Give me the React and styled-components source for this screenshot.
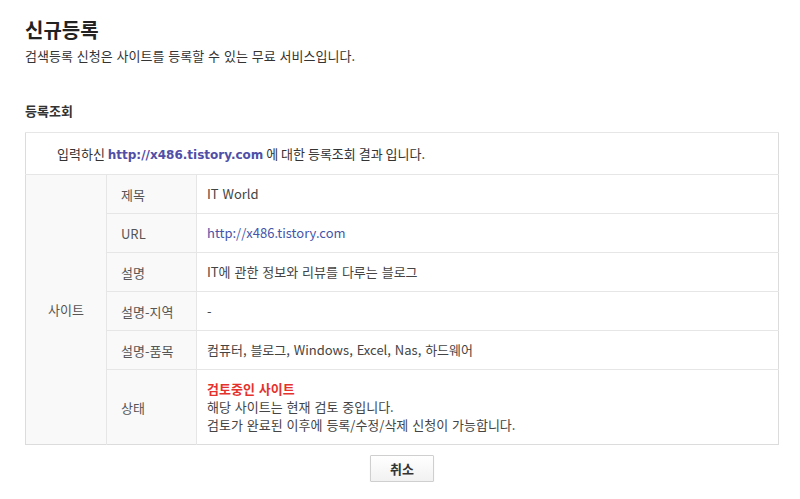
import React from "react";
import styled, { createGlobalStyle } from "styled-components";

const GlobalStyle = createGlobalStyle`
  html, body {
    margin: 0;
    padding: 0;
    background: #fff;
  }
  body {
    font-family: "Noto Sans CJK KR", "Liberation Sans", sans-serif;
    font-size: 13px;
    color: #333;
  }
`;

const rows = [
  { label: "제목", value: "IT World" },
  { label: "URL", value: "http://x486.tistory.com", link: true },
  { label: "설명", value: "IT에 관한 정보와 리뷰를 다루는 블로그" },
  { label: "설명-지역", value: "-" },
  { label: "설명-품목", value: "컴퓨터, 블로그, Windows, Excel, Nas, 하드웨어" },
];

export default function App() {
  return (
    <>
      <GlobalStyle />
      <Page>
        <Title>신규등록</Title>
        <Desc>검색등록 신청은 사이트를 등록할 수 있는 무료 서비스입니다.</Desc>
        <SectionTitle>등록조회</SectionTitle>
        <ResultTable>
          <colgroup>
            <col style={{ width: 81 }} />
            <col style={{ width: 90 }} />
            <col />
          </colgroup>
          <tbody>
            <tr>
              <HeadCell colSpan={3}>
                입력하신 <strong>http://x486.tistory.com</strong> 에 대한 등록조회 결과 입니다.
              </HeadCell>
            </tr>
            {rows.map((row, i) => (
              <tr key={row.label}>
                {i === 0 && <GroupCell rowSpan={6}>사이트</GroupCell>}
                <LabelCell>{row.label}</LabelCell>
                <ValueCell>{row.link ? <Link>{row.value}</Link> : row.value}</ValueCell>
              </tr>
            ))}
            <tr>
              <LabelCell $tall>상태</LabelCell>
              <ValueCell $tall>
                <Status>검토중인 사이트</Status>
                <div>해당 사이트는 현재 검토 중입니다.</div>
                <div>검토가 완료된 이후에 등록/수정/삭제 신청이 가능합니다.</div>
              </ValueCell>
            </tr>
          </tbody>
        </ResultTable>
        <Actions>
          <Button type="button">취소</Button>
        </Actions>
      </Page>
    </>
  );
}

const Page = styled.div`
  width: 754px;
  padding: 16px 0 0 25px;
`;

const Title = styled.h1`
  margin: 0;
  font-size: 20px;
  line-height: 28px;
  font-weight: bold;
  color: #222;
`;

const Desc = styled.p`
  margin: 3px 0 0;
  font-size: 13px;
  line-height: 18px;
  word-spacing: 1px;
  color: #333;
`;

const SectionTitle = styled.h2`
  margin: 37px 0 0;
  font-size: 13px;
  line-height: 18px;
  font-weight: bold;
  color: #333;
`;

const ResultTable = styled.table`
  width: 754px;
  margin-top: 12px;
  border-collapse: collapse;
  border: 1px solid #dcdcdc;
  table-layout: fixed;
  font-size: 13px;

  td {
    border-top: 1px solid #e6e6e6;
    vertical-align: middle;
  }
`;

const HeadCell = styled.td`
  height: 41px;
  padding: 0 0 0 31px;
  color: #333;
  background: #fff;

  strong {
    font-family: "DejaVu Sans", "Liberation Sans", sans-serif;
    font-size: 12px;
    font-weight: bold;
    color: #4f4fa8;
  }
`;

const GroupCell = styled.td`
  padding: 0;
  background: #f9f9f9;
  text-align: center;
  color: #555;
  border-right: 1px solid #e6e6e6;
`;

const LabelCell = styled.td`
  height: ${(p) => (p.$tall ? "74px" : "38px")};
  padding: 0 0 0 14px;
  background: #f9f9f9;
  color: #555;
  border-right: 1px solid #e6e6e6;
`;

const ValueCell = styled.td`
  padding: 0 0 0 10px;
  color: #444;
  background: #fff;
  word-spacing: 1px;
  line-height: 18px;
`;

const Link = styled.span`
  color: #4455aa;
`;

const Status = styled.div`
  color: #e5322d;
  font-weight: bold;
`;

const Actions = styled.div`
  display: flex;
  justify-content: center;
  padding-top: 10px;
`;

const Button = styled.button`
  width: 64px;
  height: 27px;
  border: 1px solid #cfcfcf;
  border-radius: 1px;
  background: linear-gradient(#ffffff, #f1f1f1);
  box-shadow: 0 1px 1px rgba(0, 0, 0, 0.12);
  font-family: "Noto Sans CJK KR", sans-serif;
  font-size: 13px;
  font-weight: bold;
  color: #333;
  cursor: pointer;
`;
